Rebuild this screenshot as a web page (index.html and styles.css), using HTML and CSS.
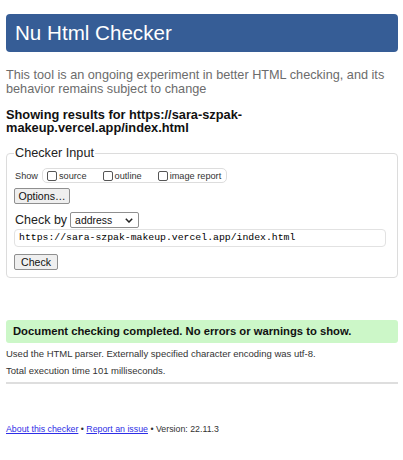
FILE: index.html
```html
<!DOCTYPE html>
<html>
<head>
<meta charset="utf-8">
<link rel="stylesheet" href="styles.css">
</head>
<body>
<h1 class="title">Nu Html Checker</h1>
<p class="intro">This tool is an ongoing experiment in better HTML checking, and its behavior remains subject to change</p>
<p class="showing">Showing results for https://sara-szpak-makeup.vercel.app/index.html</p>
<fieldset class="checker">
  <legend class="legend">Checker Input</legend>
  <div class="show-row">
    <span class="show-label">Show</span>
    <span class="show-box">
      <label class="opt"><span class="cb"></span>source</label>
      <label class="opt"><span class="cb"></span>outline</label>
      <label class="opt"><span class="cb"></span>image report</label>
    </span>
  </div>
  <div class="row options-row"><span class="btn btn-options">Options…</span></div>
  <div class="checkby">
    <span class="checkby-label">Check by</span>
    <span class="select">address<svg class="chev" width="8" height="5" viewBox="0 0 8 5"><path d="M0.8 0.8 L4 4 L7.2 0.8" fill="none" stroke="#222" stroke-width="1.5"/></svg></span>
  </div>
  <div class="url">https://sara-szpak-makeup.vercel.app/index.html</div>
  <div class="row check-row"><span class="btn btn-check">Check</span></div>
</fieldset>
<div class="success">Document checking completed. No errors or warnings to show.</div>
<p class="info first">Used the HTML parser. Externally specified character encoding was utf-8.</p>
<p class="info">Total execution time 101 milliseconds.</p>
<div class="rule"></div>
<p class="footer"><a class="link">About this checker</a> • <a class="link">Report an issue</a> • Version: 22.11.3</p>
</body>
</html>
```
FILE: styles.css
```css
html, body { background: #fff; }
body {
  margin: 0;
  padding: 14px 5px 0 6px;
  font-family: "Liberation Sans", Arial, sans-serif;
  color: #222;
}
.title {
  margin: 0;
  height: 38px;
  background: #365d96;
  border-radius: 4px;
  color: #fff;
  font-weight: normal;
  font-size: 20.6px;
  line-height: 38px;
  padding-left: 9px;
}
.intro {
  margin: 17px 0 0;
  font-size: 12.7px;
  line-height: 13.5px;
  color: #6c6c6c;
}
.showing {
  margin: 12px 0 0;
  font-size: 12.8px;
  line-height: 13px;
  font-weight: bold;
  color: #111;
}
.checker {
  margin: 12px 0 0;
  padding: 8px 7px 7px;
  border: 1px solid #dcdcdc;
  border-radius: 4px;
  min-width: 0;
}
.legend {
  padding: 0 1px;
  font-size: 12.7px;
  line-height: 14px;
  color: #222;
}
.show-row {
  display: flex;
  align-items: center;
  gap: 4px;
  padding-left: 1px;
  font-size: 9.2px;
  color: #333;
}
.show-box {
  display: flex;
  align-items: center;
  gap: 16px;
  border: 1px solid #ddd;
  border-radius: 5px;
  padding: 0 5px 0 4px;
  height: 13px;
}
.opt { display: flex; align-items: center; gap: 2px; font-size: 9.2px; }
.cb {
  display: inline-block;
  width: 8px;
  height: 8px;
  border: 1px solid #555;
  border-radius: 2px;
  background: #fff;
}
.row { display: flex; }
.options-row { margin-top: 5px; }
.check-row { margin-top: 7px; }
.btn {
  display: inline-flex;
  align-items: center;
  justify-content: center;
  box-sizing: border-box;
  height: 16px;
  font-size: 10.6px;
  background: #efefef;
  border: 1px solid #8f8f8f;
  border-radius: 2px;
  color: #111;
}
.btn-options { width: 56px; }
.btn-check { width: 44px; }
.checkby {
  display: flex;
  align-items: center;
  gap: 3px;
  margin-top: 8px;
  padding-left: 1px;
  font-size: 12.5px;
  color: #222;
}
.select {
  display: inline-flex;
  align-items: center;
  justify-content: space-between;
  box-sizing: border-box;
  width: 69px;
  height: 16px;
  padding: 0 5px 0 4px;
  border: 1px solid #8f8f8f;
  border-radius: 2px;
  font-size: 10.4px;
  color: #111;
}
.url {
  margin-top: 1px;
  box-sizing: border-box;
  height: 18px;
  line-height: 16px;
  border: 1px solid #e2e2e2;
  border-radius: 4px;
  padding-left: 4px;
  margin-right: 4px;
  font-family: "Liberation Mono", "DejaVu Sans Mono", monospace;
  font-size: 9.8px;
  color: #000;
}
.success {
  margin-top: 42px;
  height: 23px;
  line-height: 23px;
  background: #ccf7c8;
  border-radius: 3px;
  padding-left: 7px;
  font-weight: bold;
  font-size: 11.25px;
  color: #111;
}
.info {
  margin: 0;
  font-size: 9.5px;
  color: #333;
  line-height: 17px;
}
.info.first { margin-top: 2px; }
.rule {
  margin-top: 3px;
  height: 2px;
  background: #dedede;
}
.footer {
  margin: 40px 0 0;
  font-size: 8.8px;
  color: #333;
}
.link { color: #2e2ee6; text-decoration: underline; }
```
